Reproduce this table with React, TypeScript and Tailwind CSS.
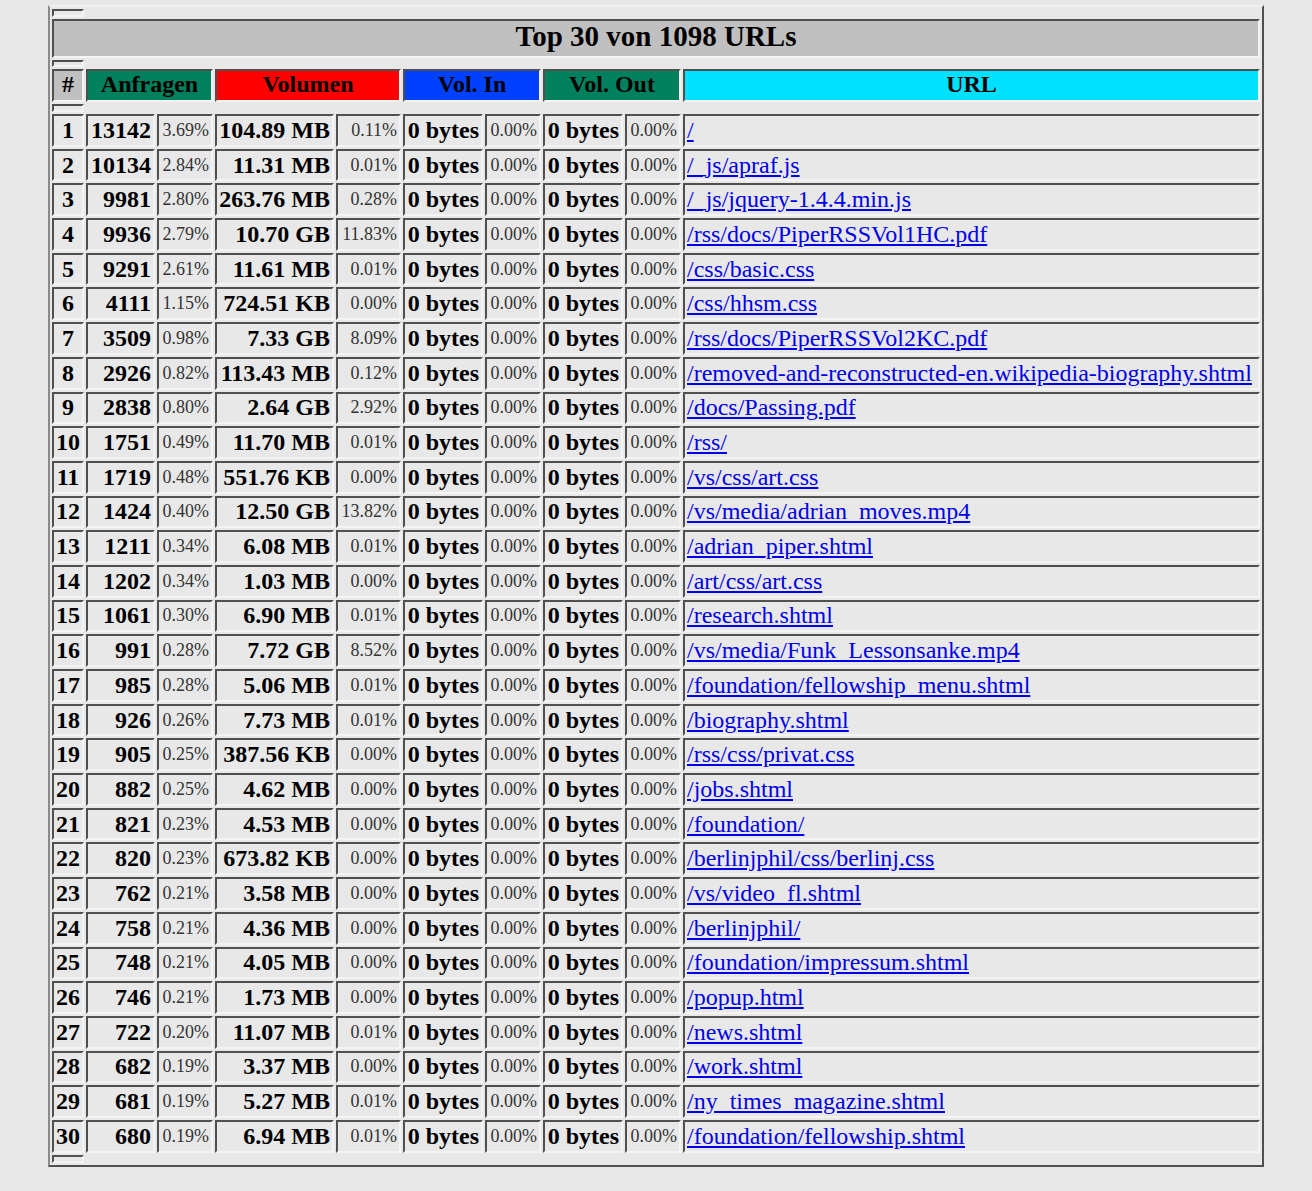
import React from "react";

type Row = [number, number, string, string, string, string];

const rows: Row[] = [
  [1, 13142, "3.69%", "104.89 MB", "0.11%", "/"],
  [2, 10134, "2.84%", "11.31 MB", "0.01%", "/_js/apraf.js"],
  [3, 9981, "2.80%", "263.76 MB", "0.28%", "/_js/jquery-1.4.4.min.js"],
  [4, 9936, "2.79%", "10.70 GB", "11.83%", "/rss/docs/PiperRSSVol1HC.pdf"],
  [5, 9291, "2.61%", "11.61 MB", "0.01%", "/css/basic.css"],
  [6, 4111, "1.15%", "724.51 KB", "0.00%", "/css/hhsm.css"],
  [7, 3509, "0.98%", "7.33 GB", "8.09%", "/rss/docs/PiperRSSVol2KC.pdf"],
  [8, 2926, "0.82%", "113.43 MB", "0.12%", "/removed-and-reconstructed-en.wikipedia-biography.shtml"],
  [9, 2838, "0.80%", "2.64 GB", "2.92%", "/docs/Passing.pdf"],
  [10, 1751, "0.49%", "11.70 MB", "0.01%", "/rss/"],
  [11, 1719, "0.48%", "551.76 KB", "0.00%", "/vs/css/art.css"],
  [12, 1424, "0.40%", "12.50 GB", "13.82%", "/vs/media/adrian_moves.mp4"],
  [13, 1211, "0.34%", "6.08 MB", "0.01%", "/adrian_piper.shtml"],
  [14, 1202, "0.34%", "1.03 MB", "0.00%", "/art/css/art.css"],
  [15, 1061, "0.30%", "6.90 MB", "0.01%", "/research.shtml"],
  [16, 991, "0.28%", "7.72 GB", "8.52%", "/vs/media/Funk_Lessonsanke.mp4"],
  [17, 985, "0.28%", "5.06 MB", "0.01%", "/foundation/fellowship_menu.shtml"],
  [18, 926, "0.26%", "7.73 MB", "0.01%", "/biography.shtml"],
  [19, 905, "0.25%", "387.56 KB", "0.00%", "/rss/css/privat.css"],
  [20, 882, "0.25%", "4.62 MB", "0.00%", "/jobs.shtml"],
  [21, 821, "0.23%", "4.53 MB", "0.00%", "/foundation/"],
  [22, 820, "0.23%", "673.82 KB", "0.00%", "/berlinjphil/css/berlinj.css"],
  [23, 762, "0.21%", "3.58 MB", "0.00%", "/vs/video_fl.shtml"],
  [24, 758, "0.21%", "4.36 MB", "0.00%", "/berlinjphil/"],
  [25, 748, "0.21%", "4.05 MB", "0.00%", "/foundation/impressum.shtml"],
  [26, 746, "0.21%", "1.73 MB", "0.00%", "/popup.html"],
  [27, 722, "0.20%", "11.07 MB", "0.01%", "/news.shtml"],
  [28, 682, "0.19%", "3.37 MB", "0.00%", "/work.shtml"],
  [29, 681, "0.19%", "5.27 MB", "0.01%", "/ny_times_magazine.shtml"],
  [30, 680, "0.19%", "6.94 MB", "0.01%", "/foundation/fellowship.shtml"],
];

const cell =
  "border-2 border-t-[#505050] border-l-[#505050] border-b-[#f4f4f4] border-r-[#f4f4f4] p-0 align-middle";
const big = "font-bold text-[24px] leading-[26px] text-black px-[2px] pb-[1px]";
const hdr = "font-bold text-[24px] leading-[26px] text-black px-[2px] pb-[3px]";
const pct = "font-normal text-[18px] leading-[20px] text-[#333] px-[2px] pb-[1px] text-right";

function Tiny() {
  return (
    <tr>
      <th className={`${cell} h-[8px]`}></th>
    </tr>
  );
}

export default function App() {
  return (
    <div
      className="min-h-[1191px] w-full bg-[#e8e8e8] pl-[48px] pt-[5px]"
      style={{ fontFamily: '"Liberation Serif", "Times New Roman", serif' }}
    >
      <table className="w-[1216px] table-fixed border-separate border-spacing-[2px] border-2 border-t-[#f0f0f0] border-l-[#8a8a8a] border-r-[#505050] border-b-[#505050] text-[16px] leading-[18px]">
        <colgroup>
          <col className="w-[32px]" />
          <col className="w-[69px]" />
          <col className="w-[56px]" />
          <col className="w-[119px]" />
          <col className="w-[65px]" />
          <col className="w-[80px]" />
          <col className="w-[56px]" />
          <col className="w-[80px]" />
          <col className="w-[56px]" />
          <col />
        </colgroup>
        <tbody>
          <Tiny />
          <tr>
            <th
              colSpan={10}
              className={`${cell} h-[39px] bg-[#c0c0c0] pb-[5px] text-center font-bold text-[29px] leading-[28px] text-black`}
            >
              Top 30 von 1098 URLs
            </th>
          </tr>
          <tr>
            <th className={`${cell} h-[7px]`}></th>
          </tr>
          <tr>
            <th className={`${cell} ${hdr} h-[33px] bg-[#c0c0c0] text-center`}>#</th>
            <th colSpan={2} className={`${cell} ${hdr} bg-[#00805c] text-center`}>
              Anfragen
            </th>
            <th colSpan={2} className={`${cell} ${hdr} bg-[#ff0000] text-center`}>
              Volumen
            </th>
            <th colSpan={2} className={`${cell} ${hdr} bg-[#0040ff] text-center`}>
              Vol. In
            </th>
            <th colSpan={2} className={`${cell} ${hdr} bg-[#00805c] text-center`}>
              Vol. Out
            </th>
            <th className={`${cell} ${hdr} bg-[#00e0ff] text-center`}>URL</th>
          </tr>
          <Tiny />
          {rows.map(([n, hits, hp, vol, vp, url]) => (
            <tr key={n}>
              <td className={`${cell} ${big} h-[32.7px] text-center`}>{n}</td>
              <td className={`${cell} ${big} text-right`}>{hits}</td>
              <td className={`${cell} ${pct}`}>{hp}</td>
              <td className={`${cell} ${big} text-right whitespace-nowrap`}>{vol}</td>
              <td className={`${cell} ${pct}`}>{vp}</td>
              <td className={`${cell} ${big} text-right whitespace-nowrap`}>0 bytes</td>
              <td className={`${cell} ${pct}`}>0.00%</td>
              <td className={`${cell} ${big} text-right whitespace-nowrap`}>0 bytes</td>
              <td className={`${cell} ${pct}`}>0.00%</td>
              <td
                className={`${cell} px-[2px] pb-[1px] text-left whitespace-nowrap text-[24px] leading-[26px] font-normal`}
              >
                <a href="#" className="text-[#0000ee] underline">
                  {url}
                </a>
              </td>
            </tr>
          ))}
          <Tiny />
        </tbody>
      </table>
    </div>
  );
}
